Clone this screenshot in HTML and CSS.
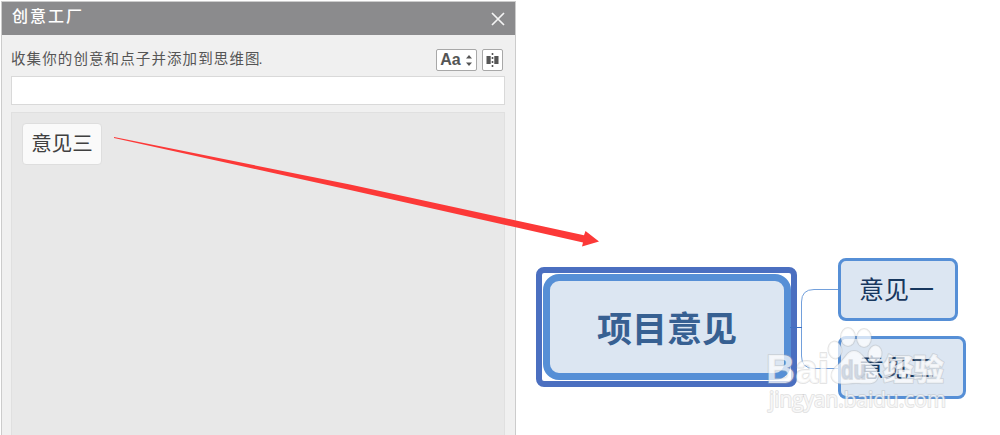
FILE: index.html
```html
<!DOCTYPE html>
<html lang="zh-CN">
<head>
<meta charset="utf-8">
<title>创意工厂</title>
<link rel="stylesheet" href="styles.css">
</head>
<body>
<div class="app">
  <section class="panel">
    <header class="panel-header">
      <h1 class="panel-title">创意工厂</h1>
      <svg class="close" width="14" height="14" viewBox="0 0 14 14"><path d="M1 1L13 13M13 1L1 13"/></svg>
    </header>
    <div class="panel-body">
      <div class="toolbar">
        <p class="hint">收集你的创意和点子并添加到思维图<span class="dot">.</span></p>
        <div class="tool tool-font">
          <span>Aa</span>
          <svg width="8" height="13" viewBox="0 0 8 13"><path d="M1 4.5L4 1L7 4.5ZM1 8.5L4 12L7 8.5Z"/></svg>
        </div>
        <div class="tool tool-split">
          <svg width="13" height="14" viewBox="0 0 13 14"><path d="M.5 3H4.7V11H.5ZM8.3 3H12.5V11H8.3ZM5.7 0H7.3V2H5.7ZM5.7 4H7.3V6H5.7ZM5.7 8H7.3V10H5.7ZM5.7 12H7.3V14H5.7Z"/></svg>
        </div>
      </div>
      <div class="input"></div>
      <div class="ideas"><div class="idea">意见三</div></div>
    </div>
  </section>
  <main class="canvas">
    <svg class="links" width="1000" height="435" viewBox="0 0 1000 435">
      <path d="M797 327.5H802M838 289.5H814Q801.5 289.5 801.5 302V356Q801.5 368.5 814 368.5H838"/>
    </svg>
    <div class="selection"><div class="topic-root">项目意见</div></div>
    <div class="topic topic-one">意见一</div>
    <div class="topic topic-two">意见二</div>
    <svg class="overlay" width="1000" height="435" viewBox="0 0 1000 435">
      <path class="root-link" d="M790 327.5H802"/>
      <path class="arrow" d="M114 137L350 184.5L584 235.2L585.5 231L599 241.5L582 246.5L583 242.5L350 190L114 138Z"/>
      <g class="mark">
        <text class="mark-logo" x="766" y="383" textLength="63" lengthAdjust="spacingAndGlyphs">Bai</text>
        <ellipse cx="835" cy="350" rx="6.5" ry="8.5" transform="rotate(-10 835 350)"/>
        <ellipse cx="848" cy="337" rx="7" ry="9"/>
        <ellipse cx="864" cy="338" rx="7" ry="9"/>
        <ellipse cx="875" cy="354" rx="6.5" ry="8.5" transform="rotate(10 875 354)"/>
        <path d="M854 351C861 351 864 359 870 364C877 369 880 374 877 379C874 385 866 383 856 383C846 383 838 386 833 380C829 374 833 369 839 364C845 359 847 351 854 351Z"/>
        <text class="mark-du" x="841" y="379" textLength="25" lengthAdjust="spacingAndGlyphs">du</text>
        <text class="mark-cn" x="883" y="380" textLength="61" lengthAdjust="spacingAndGlyphs">经验</text>
        <text class="mark-url" x="769" y="407" textLength="177" lengthAdjust="spacingAndGlyphs">jingyan.baidu.com</text>
      </g>
    </svg>
  </main>
</div>
</body>
</html>
```
FILE: styles.css
```css
* { box-sizing: border-box; }
body {
  margin: 0;
  background: #fff;
  font-family: "Liberation Sans", "Noto Sans CJK SC", sans-serif;
}
.app { position: relative; display: flex; height: 435px; overflow: hidden; }
.panel {
  display: flex;
  flex-direction: column;
  width: 515px;
  margin: 1px 0 0 1px;
  border: 1px solid #ccc;
  border-bottom: 0;
  background: #f0f0f0;
}
.panel-header {
  display: flex;
  align-items: center;
  justify-content: space-between;
  height: 33px;
  padding: 0 10px 0 10px;
  background: #8b8b8d;
}
.panel-title {
  margin: 0 0 3px;
  color: #fff;
  font-size: 16px;
  font-weight: 500;
  line-height: 24px;
  letter-spacing: 2px;
}
.close { fill: none; stroke: #f4f4f4; stroke-width: 1.7; }
.panel-body {
  display: flex;
  flex: 1;
  flex-direction: column;
  padding: 14px 10px 0 9px;
}
.toolbar { display: flex; align-items: flex-start; height: 27px; }
.hint {
  flex: 1;
  margin: 0;
  color: #555;
  font-size: 14.5px;
  line-height: 20px;
  letter-spacing: 1.1px;
  white-space: nowrap;
}
.dot { margin-left: -2px; }
.tool {
  display: flex;
  align-items: center;
  justify-content: center;
  height: 22px;
  border: 1px solid #a8a8a8;
  border-radius: 2px;
  background: #fff;
  color: #555;
}
.tool-font {
  width: 41px;
  gap: 4px;
  margin-right: 5px;
  font-size: 16px;
  font-weight: bold;
}
.tool-split { width: 21px; margin-right: 2px; }
.tool svg { fill: #555; }
.input { height: 29px; border: 1px solid #d9d9d9; background: #fff; }
.ideas {
  display: flex;
  flex: 1;
  align-items: flex-start;
  margin-top: 7px;
  padding: 10px 11px;
  border: 1px solid #e0e0e0;
  border-bottom: 0;
  background: #e8e8e8;
}
.idea {
  width: 80px;
  height: 42px;
  margin-left: -1px;
  border: 1px solid #dedede;
  border-radius: 4px;
  background: #fafafa;
  color: #404040;
  font-size: 20.5px;
  line-height: 40px;
  text-align: center;
}
.links, .overlay { position: absolute; top: 0; left: 0; }
.links path { fill: none; stroke: #72a0dc; }
.selection {
  position: absolute;
  left: 536px;
  top: 267px;
  width: 261px;
  height: 120px;
  padding: 1px 0 1px 1px;
  border: 6px solid #4b6fc0;
  border-radius: 8px;
  background: #fff;
}
.topic-root {
  height: 106px;
  border: 7px solid #568fd6;
  border-radius: 16px;
  background: #dce6f2;
  color: #376092;
  font-size: 35px;
  font-weight: bold;
  line-height: 97px;
  text-align: center;
}
.topic {
  position: absolute;
  left: 838px;
  height: 63px;
  padding-left: 18px;
  border: 3px solid #568fd6;
  border-radius: 8px;
  background: #dce6f2;
  color: #17375e;
  font-size: 25px;
  line-height: 58px;
}
.topic-one { top: 258px; width: 120px; }
.topic-two { top: 336px; width: 128px; }
.root-link { fill: none; stroke: #3f70c4; }
.arrow { fill: #fc3938; }
.mark {
  fill: #fff;
  fill-opacity: .72;
  stroke: #aaa;
  stroke-opacity: .32;
  stroke-width: 2;
  stroke-linejoin: round;
  paint-order: stroke;
}
.mark-logo { font-size: 40px; font-weight: bold; }
.mark-du { fill: #c4cfde; font-size: 26px; font-weight: bold; }
.mark-cn { font-size: 30px; font-weight: 900; }
.mark-url { font-family: "Open Sans", sans-serif; font-size: 21px; }
```
